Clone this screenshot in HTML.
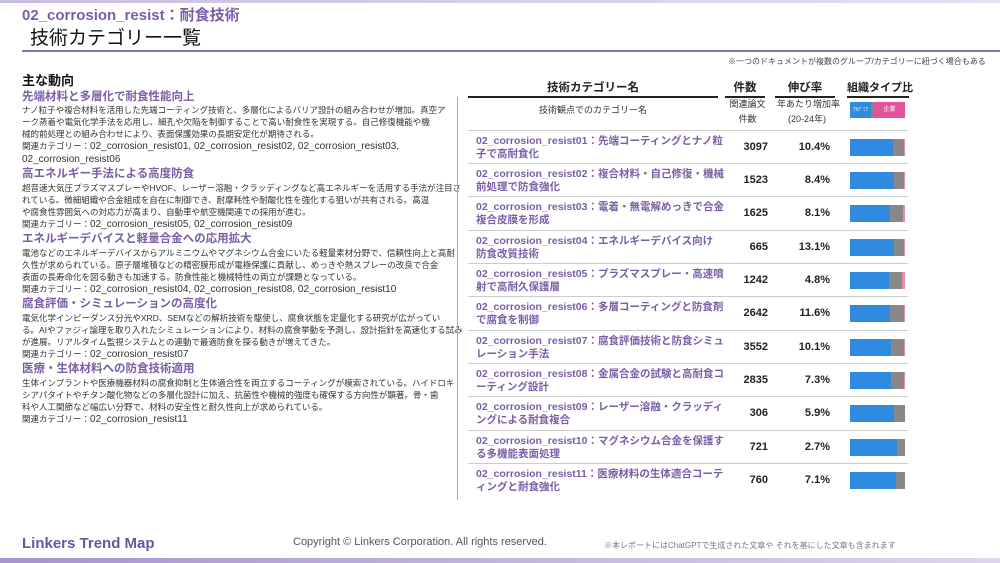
<!DOCTYPE html>
<html><head><meta charset="utf-8"><style>
*{margin:0;padding:0;box-sizing:border-box}
body{width:1000px;height:563px;position:relative;background:#fff;font-family:"Liberation Sans","Noto Sans CJK JP",sans-serif;overflow:hidden;color:#222}
.a{position:absolute;white-space:nowrap}
.topbar{position:absolute;left:0;top:0;width:1000px;height:3px;background:linear-gradient(90deg,#c9bde0,#e6dff0)}
.botbar{position:absolute;left:0;top:558px;width:1000px;height:5px;background:linear-gradient(90deg,#a694cc,#ddd5ec)}
.sec{position:absolute;left:22px;font-size:11.5px;font-weight:bold;color:#7b5ea7;white-space:nowrap}
.body{position:absolute;left:22px;font-size:8.5px;line-height:12px;color:#333;white-space:nowrap}
.body span{font-size:10px}
.row{position:absolute;left:468px;width:440px;height:33px;border-top:1.5px solid #ccc}
.row .n{position:absolute;left:8px;top:4px;width:250px;font-size:10.5px;line-height:12.5px;font-weight:bold;color:#7b5ea7}
.row .c{position:absolute;left:255px;width:45px;top:10px;text-align:right;font-size:11px;font-weight:bold;color:#222}
.row .g{position:absolute;left:305px;width:57px;top:10px;text-align:right;font-size:11px;font-weight:bold;color:#222}
.bar{position:absolute;left:382px;top:8px;width:55px;height:17px;background:#e58ab0;display:flex}
.bar i{display:block;height:100%}
.hd{position:absolute;top:79px;font-size:11.5px;font-weight:bold;text-align:center;border-bottom:2px solid #222;padding-bottom:1px;white-space:nowrap}
</style></head><body>
<div class="topbar"></div>
<div class="a" style="left:22px;top:4px;font-size:15px;font-weight:bold;color:#7b5ea7">02_corrosion_resist：耐食技術</div>
<div class="a" style="left:30px;top:23px;font-size:19px;color:#111">技術カテゴリー一覧</div>
<div class="a" style="left:22px;top:50px;width:978px;height:2px;background:#8a73b3"></div>
<div class="a" style="left:728px;top:56px;font-size:8px;color:#444">※一つのドキュメントが複数のグループ/カテゴリーに紐づく場合もある</div>

<div class="a" style="left:22px;top:70px;font-size:13px;font-weight:bold;color:#111">主な動向</div>
<div class="sec" style="top:88px">先端材料と多層化で耐食性能向上</div>
<div class="body" style="top:104px">ナノ粒子や複合材料を活用した先端コーティング技術と、多層化によるバリア設計の組み合わせが増加。真空ア<br>ーク蒸着や電気化学手法を応用し、細孔や欠陥を制御することで高い耐食性を実現する。自己修復機能や機<br>械的前処理との組み合わせにより、表面保護効果の長期安定化が期待される。<br>関連カテゴリー：<span>02_corrosion_resist01, 02_corrosion_resist02, 02_corrosion_resist03,</span><br><span>02_corrosion_resist06</span></div>
<div class="sec" style="top:165px">高エネルギー手法による高度防食</div>
<div class="body" style="top:182px">超音速大気圧プラズマスプレーやHVOF、レーザー溶融・クラッディングなど高エネルギーを活用する手法が注目さ<br>れている。微細組織や合金組成を自在に制御でき、耐摩耗性や耐酸化性を強化する狙いが共有される。高温<br>や腐食性雰囲気への対応力が高まり、自動車や航空機関連での採用が進む。<br>関連カテゴリー：<span>02_corrosion_resist05, 02_corrosion_resist09</span></div>
<div class="sec" style="top:230px">エネルギーデバイスと軽量合金への応用拡大</div>
<div class="body" style="top:247px">電池などのエネルギーデバイスからアルミニウムやマグネシウム合金にいたる軽量素材分野で、信頼性向上と高耐<br>久性が求められている。原子層堆積などの精密膜形成が電極保護に貢献し、めっきや熱スプレーの改良で合金<br>表面の長寿命化を図る動きも加速する。防食性能と機械特性の両立が課題となっている。<br>関連カテゴリー：<span>02_corrosion_resist04, 02_corrosion_resist08, 02_corrosion_resist10</span></div>
<div class="sec" style="top:295px">腐食評価・シミュレーションの高度化</div>
<div class="body" style="top:312px">電気化学インピーダンス分光やXRD、SEMなどの解析技術を駆使し、腐食状態を定量化する研究が広がってい<br>る。AIやファジィ論理を取り入れたシミュレーションにより、材料の腐食挙動を予測し、設計指針を高速化する試み<br>が進展。リアルタイム監視システムとの連動で最適防食を探る動きが増えてきた。<br>関連カテゴリー：<span>02_corrosion_resist07</span></div>
<div class="sec" style="top:360px">医療・生体材料への防食技術適用</div>
<div class="body" style="top:377px">生体インプラントや医療機器材料の腐食抑制と生体適合性を両立するコーティングが模索されている。ハイドロキ<br>シアパタイトやチタン酸化物などの多層化設計に加え、抗菌性や機械的強度も確保する方向性が顕著。骨・歯<br>科や人工関節など幅広い分野で、材料の安全性と耐久性向上が求められている。<br>関連カテゴリー：<span>02_corrosion_resist11</span></div>

<div class="a" style="left:457px;top:97px;width:1px;height:403px;background:#aaa"></div>

<div class="hd" style="left:468px;width:250px">技術カテゴリー名</div>
<div class="hd" style="left:725px;width:40px">件数</div>
<div class="hd" style="left:775px;width:60px">伸び率</div>
<div class="hd" style="left:847px;width:62px;font-size:11px">組織タイプ比</div>
<div class="a" style="left:468px;top:103px;width:250px;text-align:center;font-size:9px;color:#333">技術観点でのカテゴリー名</div>
<div class="a" style="left:725px;top:97px;width:45px;text-align:center;font-size:9px;line-height:15px;color:#333">関連論文<br>件数</div>
<div class="a" style="left:777px;top:97px;width:60px;text-align:center;font-size:9px;line-height:15px;color:#333">年あたり増加率<br>(20-24年)</div>
<div class="a" style="left:850px;top:102px;width:55px;height:16px;display:flex;font-size:5px;color:#fff;line-height:16px">
<span style="width:21px;background:#2f8be0;text-align:center">ｱｶﾃﾞﾐｱ</span><span style="width:3px;background:#888"></span><span style="width:31px;background:#e0559a;text-align:center;font-size:6px">企業</span></div>

<div class="row" style="top:130px"><div class="n">02_corrosion_resist01：先端コーティングとナノ粒子で高耐食化</div><div class="c">3097</div><div class="g">10.4%</div><div class="bar"><i style="width:43px;background:#2f8be0"></i><i style="width:11px;background:#888"></i></div></div>
<div class="row" style="top:163px"><div class="n">02_corrosion_resist02：複合材料・自己修復・機械前処理で防食強化</div><div class="c">1523</div><div class="g">8.4%</div><div class="bar"><i style="width:44px;background:#2f8be0"></i><i style="width:10px;background:#888"></i></div></div>
<div class="row" style="top:196px"><div class="n">02_corrosion_resist03：電着・無電解めっきで合金複合皮膜を形成</div><div class="c">1625</div><div class="g">8.1%</div><div class="bar"><i style="width:40px;background:#2f8be0"></i><i style="width:13px;background:#888"></i></div></div>
<div class="row" style="top:230px"><div class="n">02_corrosion_resist04：エネルギーデバイス向け<br>防食改質技術</div><div class="c">665</div><div class="g">13.1%</div><div class="bar"><i style="width:44px;background:#2f8be0"></i><i style="width:10px;background:#888"></i></div></div>
<div class="row" style="top:263px"><div class="n">02_corrosion_resist05：プラズマスプレー・高速噴射で高耐久保護層</div><div class="c">1242</div><div class="g">4.8%</div><div class="bar"><i style="width:39px;background:#2f8be0"></i><i style="width:13px;background:#888"></i></div></div>
<div class="row" style="top:296px"><div class="n">02_corrosion_resist06：多層コーティングと防食剤で腐食を制御</div><div class="c">2642</div><div class="g">11.6%</div><div class="bar"><i style="width:40px;background:#2f8be0"></i><i style="width:14px;background:#888"></i></div></div>
<div class="row" style="top:330px"><div class="n">02_corrosion_resist07：腐食評価技術と防食シミュレーション手法</div><div class="c">3552</div><div class="g">10.1%</div><div class="bar"><i style="width:41px;background:#2f8be0"></i><i style="width:13px;background:#888"></i></div></div>
<div class="row" style="top:363px"><div class="n">02_corrosion_resist08：金属合金の試験と高耐食コーティング設計</div><div class="c">2835</div><div class="g">7.3%</div><div class="bar"><i style="width:41px;background:#2f8be0"></i><i style="width:13px;background:#888"></i></div></div>
<div class="row" style="top:396px"><div class="n">02_corrosion_resist09：レーザー溶融・クラッディングによる耐食複合</div><div class="c">306</div><div class="g">5.9%</div><div class="bar"><i style="width:44px;background:#2f8be0"></i><i style="width:11px;background:#888"></i></div></div>
<div class="row" style="top:430px"><div class="n">02_corrosion_resist10：マグネシウム合金を保護する多機能表面処理</div><div class="c">721</div><div class="g">2.7%</div><div class="bar"><i style="width:47px;background:#2f8be0"></i><i style="width:8px;background:#888"></i></div></div>
<div class="row" style="top:463px"><div class="n">02_corrosion_resist11：医療材料の生体適合コーティングと耐食強化</div><div class="c">760</div><div class="g">7.1%</div><div class="bar"><i style="width:46px;background:#2f8be0"></i><i style="width:9px;background:#888"></i></div></div>

<div class="a" style="left:22px;top:535px;font-size:15px;font-weight:bold;color:#6a55a0">Linkers Trend Map</div>
<div class="a" style="left:293px;top:536px;font-size:11px;color:#555">Copyright © Linkers Corporation. All rights reserved.</div>
<div class="a" style="left:604px;top:540px;font-size:8px;color:#777">※本レポートにはChatGPTで生成された文章や それを基にした文章も含まれます</div>
<div class="botbar"></div>
</body></html>
